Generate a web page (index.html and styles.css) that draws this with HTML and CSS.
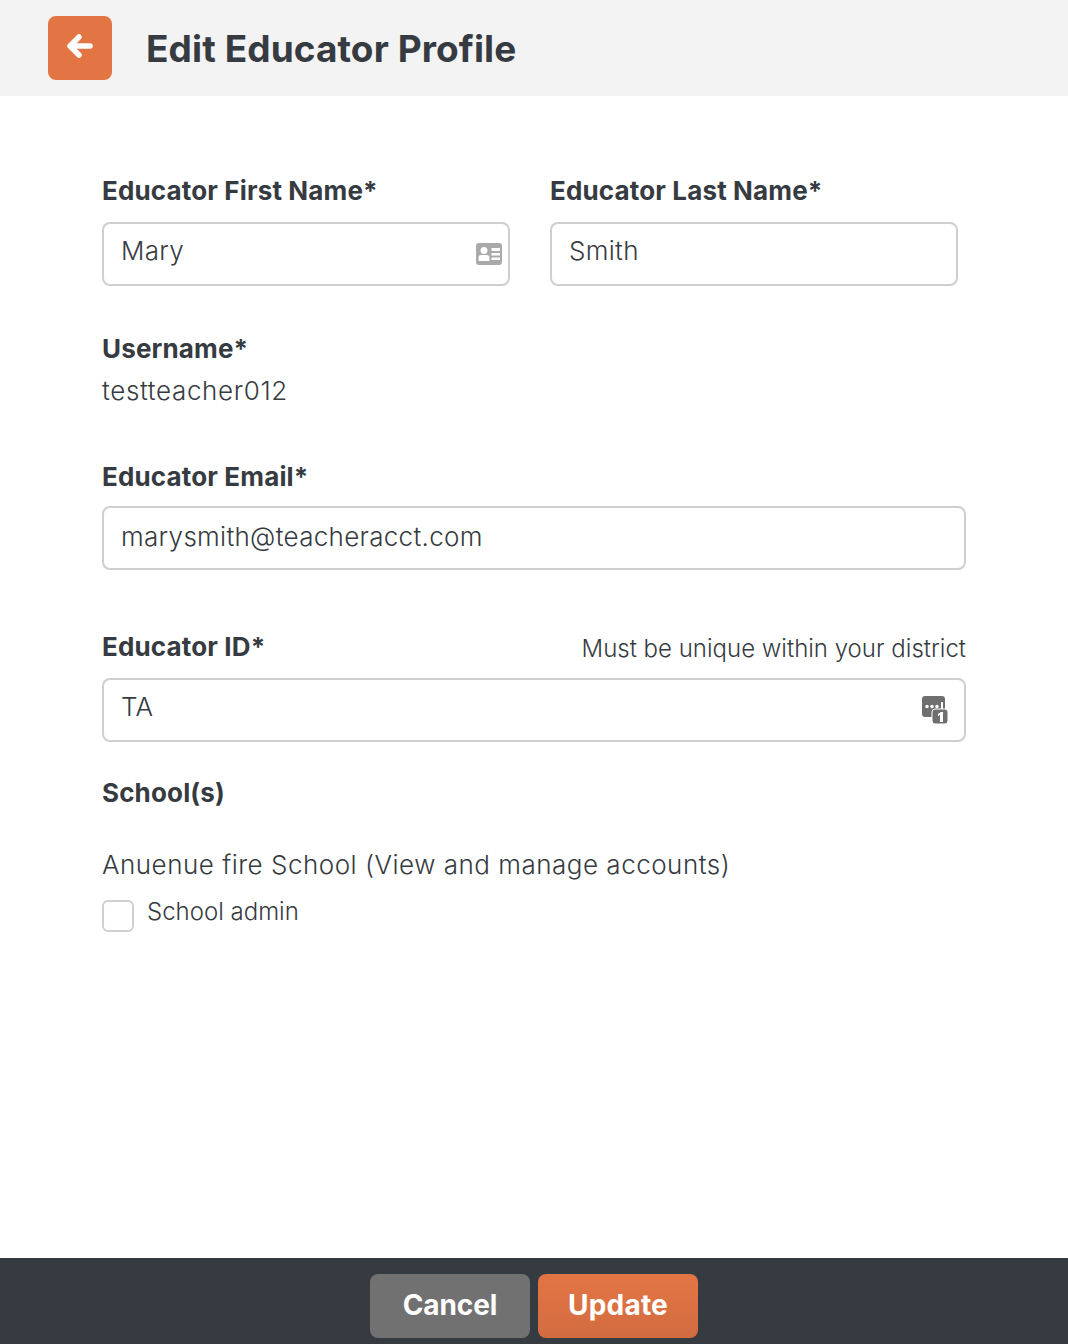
FILE: index.html
```html
<!DOCTYPE html>
<html lang="en">
<head>
    <meta charset="UTF-8">
    <title>Edit Educator Profile</title>
    <link rel="stylesheet" href="styles.css">
</head>
<body>

    <header class="top-bar">
        <button class="back-button" aria-label="Back">
            <svg width="28" height="26" viewBox="0 0 28 26">
                <path d="M13 4 L4 13 L13 22 M5 13 H24" fill="none" stroke="#fff" stroke-width="5.5" stroke-linecap="round" stroke-linejoin="round"/>
            </svg>
        </button>
        <h1>Edit Educator Profile</h1>
    </header>

    <main class="form">
        <div class="name-row">
            <div class="field">
                <label>Educator First Name*</label>
                <div class="input-box">
                    <span>Mary</span>
                    <svg class="input-icon" width="26" height="22" viewBox="0 0 26 22">
                        <rect width="26" height="22" rx="3" fill="#a9a9a9"/>
                        <circle cx="8" cy="7.5" r="3.5" fill="#fff"/>
                        <path d="M2.5 18 V15 Q2.5 12 5 12 H11 Q13.5 12 13.5 15 V18 Z" fill="#fff"/>
                        <path d="M15.5 5 H24 V8 H15.5 Z M15.5 10 H24 V12.5 H15.5 Z M15.5 14.5 H24 V17 H15.5 Z" fill="#fff"/>
                    </svg>
                </div>
            </div>
            <div class="field">
                <label>Educator Last Name*</label>
                <div class="input-box"><span>Smith</span></div>
            </div>
        </div>

        <div class="username">
            <label>Username*</label>
            <p>testteacher012</p>
        </div>

        <div class="field email">
            <label>Educator Email*</label>
            <div class="input-box"><span>marysmith@teacheracct.com</span></div>
        </div>

        <div class="field educator-id">
            <div class="label-row">
                <label>Educator ID*</label>
                <small>Must be unique within your district</small>
            </div>
            <div class="input-box">
                <span>TA</span>
                <svg class="input-icon id-icon" width="26" height="28" viewBox="0 0 26 28">
                    <rect width="23" height="21" rx="3" fill="#6f6f6f"/>
                    <circle cx="5" cy="10.5" r="1.7" fill="#fff"/>
                    <circle cx="10" cy="10.5" r="1.7" fill="#fff"/>
                    <circle cx="15" cy="10.5" r="1.7" fill="#fff"/>
                    <rect x="19" y="6" width="2" height="7" fill="#fff"/>
                    <rect x="10" y="13" width="16" height="15" rx="3" fill="#6f6f6f" stroke="#fff" stroke-width="1"/>
                    <path d="M16 18 L19 16 H21 V26 H18 V19 L16 20 Z" fill="#fff"/>
                </svg>
            </div>
        </div>

        <h2>School(s)</h2>
        <p class="school-name">Anuenue fire School (View and manage accounts)</p>
        <div class="checkbox-row">
            <span class="checkbox"></span>
            <span class="checkbox-label">School admin</span>
        </div>
    </main>

    <footer class="bottom-bar">
        <button class="btn btn-cancel">Cancel</button>
        <button class="btn btn-update">Update</button>
    </footer>

</body>
</html>
```
FILE: styles.css
```css
body {
    margin: 0;
    height: 1344px;
    display: flex;
    flex-direction: column;
    font-family: "Inter", "Open Sans", sans-serif;
    color: #363b41;
    background-color: #fff;
}

.top-bar {
    height: 96px;
    box-sizing: border-box;
    padding-left: 48px;
    display: flex;
    align-items: center;
    background-color: #f3f3f3;
}

.back-button {
    width: 64px;
    height: 64px;
    padding: 0 1px 4px 0;
    border: none;
    border-radius: 8px;
    background-color: #e37545;
    display: flex;
    align-items: center;
    justify-content: center;
}

h1 {
    margin: 0 0 0 34px;
    font-size: 37px;
    font-weight: 700;
    letter-spacing: 0.1px;
    color: #363b41;
}

.form {
    flex-grow: 1;
    padding: 78px 102px 0;
}

label, h2 {
    display: block;
    margin: 0;
    font-size: 26px;
    line-height: 34px;
    font-weight: 700;
    letter-spacing: 0.15px;
}

.name-row {
    display: flex;
    gap: 40px;
    width: 856px;
}

.name-row .field {
    flex: 1;
}

.input-box {
    height: 64px;
    margin-top: 14px;
    box-sizing: border-box;
    padding: 0 6px 8px 17px;
    border: 2px solid #cfcfcf;
    border-radius: 8px;
    display: flex;
    align-items: center;
    justify-content: space-between;
    font-size: 26px;
    font-weight: 300;
    letter-spacing: 0.3px;
}

.input-icon {
    margin-top: 8px;
}

.id-icon {
    margin: 6px 10px 0 0;
}

.username {
    margin-top: 46px;
}

.username p {
    margin: 8px 0 0;
    font-size: 26px;
    font-weight: 300;
    line-height: 34px;
    letter-spacing: 0.65px;
}

.email {
    margin-top: 52px;
}

.email .input-box {
    margin-top: 12px;
    padding-bottom: 4px;
}

.educator-id {
    margin-top: 60px;
}

.educator-id .input-box {
    padding-bottom: 7px;
}

.label-row {
    display: flex;
    justify-content: space-between;
    align-items: center;
}

.label-row small {
    margin-top: 2px;
    font-size: 24px;
    font-weight: 300;
}

h2 {
    margin-top: 34px;
}

.school-name {
    margin: 38px 0 0;
    font-size: 26px;
    font-weight: 300;
    line-height: 34px;
    letter-spacing: 0.5px;
}

.checkbox-row {
    display: flex;
    align-items: flex-start;
    gap: 13px;
    margin-top: 18px;
    font-size: 24px;
    font-weight: 300;
    line-height: 30px;
}

.checkbox {
    width: 32px;
    height: 32px;
    box-sizing: border-box;
    border: 2px solid #cfcfcf;
    border-radius: 6px;
}

.checkbox-label {
    margin-top: -3px;
}

.bottom-bar {
    height: 86px;
    box-sizing: border-box;
    padding-top: 16px;
    display: flex;
    justify-content: center;
    gap: 8px;
    background-color: #363a41;
}

.btn {
    width: 160px;
    height: 64px;
    padding-bottom: 4px;
    border: none;
    border-radius: 8px;
    color: #fff;
    font-family: inherit;
    font-size: 28px;
    font-weight: 700;
    letter-spacing: -0.1px;
}

.btn-cancel {
    background-color: #717171;
}

.btn-update {
    letter-spacing: 0.2px;
    background-image: linear-gradient(#e37545, #d26c40);
}
```
